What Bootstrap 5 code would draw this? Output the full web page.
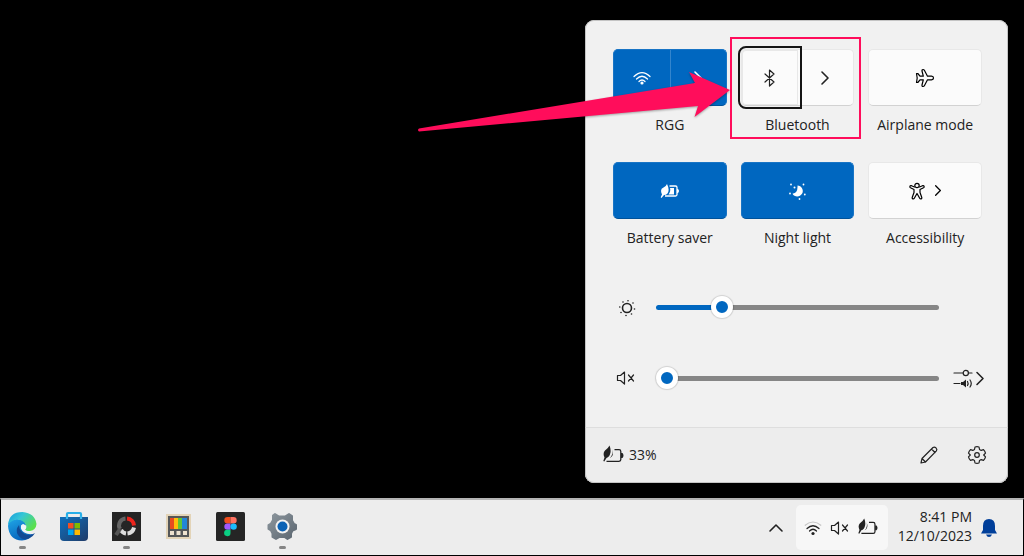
<!DOCTYPE html>
<html lang="en">
<head>
<meta charset="utf-8">
<meta name="viewport" content="width=device-width, initial-scale=1">
<title>Quick settings</title>
<link href="https://cdn.jsdelivr.net/npm/bootstrap@5.3.0/dist/css/bootstrap.min.css" rel="stylesheet">
<style>
  :root { --accent: #0067c0; --ink: #222; --pink: #ff0d5b; }
  body { background: #000; color: var(--ink); font: 14px/20px "Open Sans", "Noto Sans", sans-serif; }
  svg { display: block; }
  .stroke { fill: none; stroke: currentColor; stroke-width: 1.2; stroke-linecap: round; stroke-linejoin: round; }
  .stroke.bold { stroke-width: 1.6; }
  .desktop { padding: 20px 16px 15px; }
  .panel { width: 423px; background: #f1f1f1; border-radius: 9px; box-shadow: inset 0 0 0 1px #c4c4c4; }
  .toggles { display: grid; grid-template-columns: repeat(3, 1fr); column-gap: 14px; row-gap: 27px; padding: 29px 26px 0 28px; }
  .tile { height: 57px; border-radius: 5px; background: #fbfbfb; border: 1px solid #e8e8e8; border-bottom-color: #d2d2d2; }
  .tile.on { background: var(--accent); border-color: #1874c5; border-bottom-color: #00529a; color: #fff; }
  .plain { background: none; border: 0; padding: 0; color: inherit; }
  .split-line { border-left: 1px solid #3385cd; }
  .focused { outline: 2px solid #151515; outline-offset: 2px; border-radius: 4px 0 0 4px; z-index: 1; box-shadow: inset 0 0 0 1px #e8e8e8; }
  .caption { margin-top: 9px; text-align: center; white-space: nowrap; }
  .marker { position: absolute; inset: -12px -7px -4px -11px; border: 2px solid var(--pink); pointer-events: none; z-index: 2; }
  .arrow { position: absolute; left: -170px; top: 48px; z-index: 3; pointer-events: none; filter: drop-shadow(0 1px 1px #0005); }
  .slider-row { height: 24px; margin-top: 47px; padding: 0 23px 0 31px; }
  .level { appearance: none; -webkit-appearance: none; height: 22px; margin: 0; background: transparent; }
  .level::-webkit-slider-runnable-track { height: 5px; border-radius: 3px; background: linear-gradient(to right, var(--accent) var(--fill), #868686 var(--fill)); }
  .level::-webkit-slider-thumb { -webkit-appearance: none; width: 22px; height: 22px; margin-top: -9px; border: 5px solid #fff; border-radius: 50%; background: var(--accent); box-shadow: 0 0 1px 1px #0002; }
  .mixer { flex: 0 0 32px; margin-left: 14px; }
  .panel-foot { height: 56px; margin-top: 37px; padding: 0 20px 0 17px; background: #ededed; border: 1px solid #c4c4c4; border-top-color: #dedede; border-radius: 0 0 9px 9px; }
  .taskbar { height: 58px; background: #ededed; border: 1px solid #000; border-top: 2px solid #b4b4b4; padding: 0 25px 0 6px; }
  .apps { gap: 22px; }
  .app { width: 30px; height: 45px; padding-top: 6px; display: flex; flex-direction: column; align-items: center; }
  .app.running::after { content: ""; width: 7px; height: 3px; margin-top: 5px; border-radius: 2px; background: #858585; }
  .tray { width: 92px; height: 45px; border-radius: 5px; background: #f7f7f7; }
  .clock { line-height: 19px; margin: 0 8px 3px 10px; }
</style>
</head>
<body>
<svg width="0" height="0" class="position-absolute" aria-hidden="true">
  <defs>
    <symbol id="chev" viewBox="0 0 10 14"><path class="stroke bold" d="M2 1l6 6-6 6"/></symbol>
    <symbol id="leafbatt" viewBox="0 0 22 20">
      <path fill="currentColor" d="M6.500.5Q8 4 7.500 7.500 6.500 12 3.500 13L1.300 16.500.3 16 1.500 12.500Q-.5 8 2 5.500 5 3.500 6.500.5z"/>
      <path fill="currentColor" d="M9 4.500q1.500 4.500-2 8.500 4.500-2.500 2-8.500z"/>
      <path fill="none" stroke="currentColor" stroke-width="1.300" d="M11.500 4.700h4.500q1.800 0 1.800 1.800v8q0 1.800-1.800 1.800H3.500"/>
      <path fill="currentColor" d="M18 8h1.500q2 2.500 0 5H18z"/>
    </symbol>
    <symbol id="mute" viewBox="0 0 20 16"><path class="stroke" d="M1.500 5.500v5h3L8.500 14V2L4.500 5.500zM12.500 5l5 6M17.500 5l-5 6"/></symbol>
  </defs>
</svg>
<div class="d-flex flex-column min-vh-100">
  <main class="desktop flex-grow-1 d-flex justify-content-end align-items-end">
    <section class="panel position-relative" aria-label="Quick settings">
      <div class="toggles">
        <div>
          <div class="tile on d-flex">
            <button class="plain flex-fill w-50 d-flex align-items-center justify-content-center" aria-label="Wi-Fi">
              <svg width="18" height="16" viewBox="0 0 18 16"><path class="stroke" d="M1 6.500q8-8 16 0M3.500 9q5.500-5.500 11 0M6 11.500q3-3 6 0"/><circle cx="9" cy="13" r="1.600" fill="currentColor"/></svg>
            </button>
            <button class="plain split-line flex-fill w-50 d-flex align-items-center justify-content-center" aria-label="Manage Wi-Fi"><svg width="10" height="14"><use href="#chev"/></svg></button>
          </div>
          <div class="caption">RGG</div>
        </div>
        <div class="position-relative">
          <div class="tile d-flex">
            <button class="plain focused position-relative flex-fill w-50 d-flex align-items-center justify-content-center" aria-label="Bluetooth">
              <svg width="14" height="18" viewBox="0 0 14 18"><path class="stroke" d="M2 5l9 8-4.500 4V1L11 5l-9 8"/></svg>
            </button>
            <button class="plain flex-fill w-50 d-flex align-items-center justify-content-center" aria-label="Manage Bluetooth"><svg width="10" height="14"><use href="#chev"/></svg></button>
          </div>
          <div class="caption">Bluetooth</div>
          <div class="marker"></div>
        </div>
        <div>
          <button class="tile w-100 d-flex align-items-center justify-content-center" aria-label="Airplane mode">
            <svg width="20" height="20" viewBox="0 0 20 20"><path class="stroke" d="M1.500 5.500h1.300L5 8.200h3.300L7 3q-.2-1.500 1-1.500 1 0 1.500 1l3 5.700h4q2 .2 2 1.800t-2 1.800h-4l-3 5.700q-.5 1-1.500 1-1.200 0-1-1.500l1.300-5.200H5l-2.200 2.700H1.500L2.200 10z"/></svg>
          </button>
          <div class="caption">Airplane mode</div>
        </div>
        <div>
          <button class="tile on w-100 d-flex align-items-center justify-content-center" aria-label="Battery saver">
            <svg width="20" height="16" viewBox="0 0 20 16"><path fill="currentColor" d="M7 1q3 6 .5 9.500Q6 12 4 12l-2.500 3-.8-.7L2 11.500Q-.5 6 3.500 4.500 6 3.500 7 1z"/><path fill="none" stroke="currentColor" stroke-width="1.300" d="M9.500 3h6Q17 3 17 4.500v7q0 1.500-1.500 1.500H5"/><path fill="currentColor" d="M10 5h4v6.500H8.500Q11 8 10 5zM17 6h1q2 2 0 4h-1z"/></svg>
          </button>
          <div class="caption">Battery saver</div>
        </div>
        <div>
          <button class="tile on w-100 d-flex align-items-center justify-content-center" aria-label="Night light">
            <svg width="18" height="18" viewBox="0 0 18 18" fill="currentColor"><path d="M9.500 3.500a5.500 5.500 0 1 1-5 8.200Q10 11 9.500 3.500z"/><circle cx="3" cy="2.500" r=".9"/><circle cx="6.500" cy="5.500" r="1"/><circle cx="2" cy="11.500" r=".9"/><circle cx="15.500" cy="2.500" r=".9"/><circle cx="16.800" cy="12.500" r=".9"/><circle cx="11.500" cy="17" r=".9"/></svg>
          </button>
          <div class="caption">Night light</div>
        </div>
        <div>
          <button class="tile w-100 d-flex align-items-center justify-content-center gap-2" aria-label="Accessibility">
            <svg width="18" height="18" viewBox="0 0 18 18"><g class="stroke"><circle cx="9" cy="3.500" r="2.200"/><path d="M6.500 5L3.500 3.700q-1.200-.3-1.600.6-.3 1 .6 1.500L6 7.500v3l-1.800 5q-.2 1 .6 1.400 1 .3 1.500-.6L9 11.500l2.700 4.800q.5.900 1.500.6.800-.4.600-1.400L12 10.500v-3l3.500-1.700q.9-.5.600-1.500-.4-.9-1.600-.6L11.500 5"/></g></svg>
            <svg width="8" height="11"><use href="#chev"/></svg>
          </button>
          <div class="caption">Accessibility</div>
        </div>
      </div>

      <div class="slider-row d-flex align-items-center">
        <label for="bright" aria-label="Brightness" class="me-3"><svg width="20" height="20" viewBox="0 0 20 20"><circle class="stroke bold" cx="11" cy="11" r="4.500"/><g fill="currentColor"><circle cx="12" cy="3.800" r=".8"/><circle cx="7" cy="5" r=".8"/><circle cx="17" cy="6" r=".8"/><circle cx="3.800" cy="10" r=".8"/><circle cx="18.500" cy="12" r=".8"/><circle cx="5" cy="15.500" r=".8"/><circle cx="10" cy="18.500" r=".8"/><circle cx="15.500" cy="17" r=".8"/></g></svg></label>
        <input id="bright" class="level flex-fill ms-1" type="range" min="0" max="100" value="21" style="--fill:23%">
        <span class="mixer"></span>
      </div>
      <div class="slider-row d-flex align-items-center">
        <label for="volume" aria-label="Volume" class="me-3"><svg width="20" height="16"><use href="#mute"/></svg></label>
        <input id="volume" class="level flex-fill ms-1" type="range" min="0" max="100" value="0" style="--fill:0%">
        <button class="plain mixer" aria-label="Sound output"><svg width="32" height="20" viewBox="0 0 32 20"><g class="stroke"><path d="M1 5h9M15.500 5H19M1 15.500h6"/><circle cx="12.800" cy="5" r="2.600"/><path d="M14.500 13.500q1.200 2 0 4M17 12q2.500 3.500 0 7"/></g><path class="stroke bold" d="M24 4.500l6 6-6 6"/><path fill="currentColor" d="M8 14h2l3-2.500v8L10 17H8z"/></svg></button>
      </div>

      <div class="panel-foot d-flex align-items-center">
        <button class="plain d-flex align-items-center gap-1" aria-label="Battery 33%"><svg width="22" height="20"><use href="#leafbatt"/></svg><span>33%</span></button>
        <button class="plain ms-auto me-4" aria-label="Edit quick settings"><svg width="20" height="20" viewBox="0 0 20 20"><path class="stroke" d="M2 18l1-4.500L14 2.500q1.500-1 3 .4 1.500 1.600.4 3L6.500 17zM12.500 4l3.500 3.500M3 13.500L6.500 17"/></svg></button>
        <button class="plain ms-1" aria-label="All settings"><svg width="20" height="20" viewBox="0 0 20 20"><path class="stroke" d="M8 2q2-.6 4 0l.5 2.400 1.700 1 2.300-.8q1.500 1.500 2 3.500L16.700 10l1.800 1.900q-.5 2-2 3.500l-2.300-.8-1.700 1L12 18q-2 .6-4 0l-.5-2.400-1.700-1-2.300.8q-1.500-1.500-2-3.500L3.300 10 1.500 8.100q.5-2 2-3.500l2.300.8 1.700-1z"/><circle class="stroke" cx="10" cy="10" r="2.300"/></svg></button>
      </div>
      <svg class="arrow" width="320" height="68" viewBox="415 68 320 68" aria-hidden="true"><path fill="#ff0d5b" d="M419 128.500L695 83 689 72 730 90 694.500 117 698 106 419 131.500Q417 130 419 128.500z"/></svg>
    </section>
  </main>

  <footer class="taskbar d-flex align-items-center">
    <nav class="apps d-flex" aria-label="Pinned apps">
      <button class="plain app running" aria-label="Edge"><svg width="30" height="30" viewBox="0 0 30 30">
        <defs><linearGradient id="eg" x1="0" y1="0" x2="1" y2=".6"><stop offset="0" stop-color="#159bdd"/><stop offset=".45" stop-color="#35c6d6"/><stop offset="1" stop-color="#5be04d"/></linearGradient><linearGradient id="eb" x1="0" y1="0" x2=".5" y2="1"><stop offset="0" stop-color="#20a6e6"/><stop offset="1" stop-color="#0763bb"/></linearGradient></defs>
        <path fill="url(#eb)" d="M1 15Q1 8 10 8 18 8 19 14L14 17Q16 24 26 23 22 29.500 15 29.500 2 29 1 15z"/>
        <path fill="url(#eg)" d="M1 14Q2 1 15.500 1 28 2 29.500 13 29 19 23 20 18 20 18 18.500 20 17 19 14 17 9 10 8.500 4 9 1 14z"/>
        <path fill="#114a94" d="M12 14Q8 19 11 24 15 30 22 27.500 26 26 28 22 20 27 15 21 12 18 12 14z"/><path fill="#eef6fa" d="M14 14.500q2-3 4.500 0 1 2-.5 4 1 2.500 7 1.500-2 3-6 1.500-6-2-5-7z"/></svg></button>
      <button class="plain app" aria-label="Store"><svg width="30" height="30" viewBox="0 0 30 30"><defs><linearGradient id="sg" x1="0" y1="0" x2="1" y2="1"><stop offset="0" stop-color="#0f70bd"/><stop offset="1" stop-color="#203b68"/></linearGradient></defs><path fill="none" stroke="#27aee8" stroke-width="2.200" d="M8 7V3q0-1 1-1h12q1 0 1 1v4"/><path fill="url(#sg)" d="M1 6h28v20q0 4-4 4H5q-4 0-4-4z"/><path stroke="#35b5ec" stroke-width="2.200" d="M8 5v3M22 5v3"/><path fill="#f25022" d="M9 12h5.500v5.500H9z"/><path fill="#7fba00" d="M15.500 12H21v5.500h-5.500z"/><path fill="#00a4ef" d="M9 18.500h5.500V24H9z"/><path fill="#ffb900" d="M15.500 18.500H21V24h-5.500z"/></svg></button>
      <button class="plain app running" aria-label="Screen recorder"><svg width="30" height="30" viewBox="0 0 30 30"><path fill="#252525" d="M1 1h29v29H1z"/><g fill="none" stroke-width="4"><path stroke="#666" d="M9 18a7 7 0 0 1 5.500-10.500"/><path stroke="#ed241c" d="M16 7.500a7.500 7.500 0 0 1 7 7"/><path stroke="#ddd" d="M23 16.500a7.500 7.500 0 0 1-6.500 6M15 22.500a7 7 0 0 1-5-3.500"/><path stroke="#555" d="M9 18l-4 6"/></g></svg></button>
      <button class="plain app" aria-label="PowerToys"><svg width="30" height="30" viewBox="0 0 30 30"><path fill="#e3d4b8" d="M3 3h25v25H3z"/><path fill="#555759" d="M5 5h21v21H5z"/><path fill="#e74b20" d="M7 7h4v11H7z"/><path fill="#ffbd0b" d="M11 7h4v11h-4z"/><path fill="#60c538" d="M15 7h4v11h-4z"/><path fill="#2286d8" d="M19 7h5v11h-5z"/><path fill="#eee2cf" d="M7 20h4v4H7zM13.500 20h4v4h-4zM20 20h4v4h-4z"/></svg></button>
      <button class="plain app" aria-label="Figma"><svg width="30" height="30" viewBox="0 0 30 30"><rect x="1" y="1" width="29" height="29" rx="1.500" fill="#252525"/><path fill="#f24e1e" d="M15.500 6h-3a3.200 3.200 0 0 0 0 6.400h3z"/><path fill="#ff7262" d="M15.500 6h3a3.200 3.200 0 0 1 0 6.400h-3z"/><path fill="#a259ff" d="M15.500 12.400h-3a3.200 3.200 0 0 0 0 6.400h3z"/><circle cx="18.600" cy="15.600" r="3.200" fill="#1abcfe"/><path fill="#0acf83" d="M15.500 18.800h-3a3.200 3.200 0 1 0 3 3.200z"/></svg></button>
      <button class="plain app running" aria-label="Settings"><svg width="30" height="30" viewBox="0 0 30 30"><defs><linearGradient id="gg" x1="0" y1="0" x2="1" y2="1"><stop offset="0" stop-color="#8c969d"/><stop offset="1" stop-color="#5b6670"/></linearGradient></defs><path fill="url(#gg)" stroke="url(#gg)" stroke-width="2" stroke-linejoin="round" d="M8 3l4 2.500h6L22 3l3 2v4.500l2 3.500 2 1v4l-3.500 1.500L24 22.500V26l-3.500 2L17.500 26h-5L9 28l-3.500-2v-3.500L4 19.500 1.500 18v-4L4 12.500 6 9V4.500z"/><circle cx="15.500" cy="15.500" r="7" fill="#f2f2f2"/><circle cx="15.500" cy="15.500" r="5" fill="#0a62b5"/></svg></button>
    </nav>
    <div class="ms-auto d-flex align-items-center">
      <button class="plain me-2" aria-label="Show hidden icons"><svg width="24" height="14" viewBox="0 0 24 14"><path class="stroke bold" d="M6 10l6-6 6 6"/></svg></button>
      <button class="plain tray d-flex align-items-center justify-content-center gap-2" aria-label="Network, volume, battery">
        <svg width="18" height="16" viewBox="0 0 18 16"><path fill="none" stroke="#c4c4c4" stroke-width="1.200" d="M.8 5.500q8.200-7 16.400 0"/><path class="stroke" d="M3 8.500q6-5.500 12 0M5.500 11q3.500-3.500 7 0"/><circle cx="9" cy="13.500" r="1.600" fill="currentColor"/></svg>
        <svg width="20" height="16"><use href="#mute"/></svg>
        <svg width="21" height="19"><use href="#leafbatt"/></svg>
      </button>
      <button class="plain clock text-end">8:41 PM<br>12/10/2023</button>
      <button class="plain" aria-label="Notifications"><svg width="18" height="20" viewBox="0 0 18 20"><path fill="#003f9a" d="M9 1q6 0 6 7v4l2 3.500H1L3 12V8q0-7 6-7zM6 16.500h6q-1 2.500-3 2.500t-3-2.500z"/></svg></button>
    </div>
  </footer>
</div>
<script src="https://cdn.jsdelivr.net/npm/bootstrap@5.3.0/dist/js/bootstrap.bundle.min.js"></script>
</body>
</html>
